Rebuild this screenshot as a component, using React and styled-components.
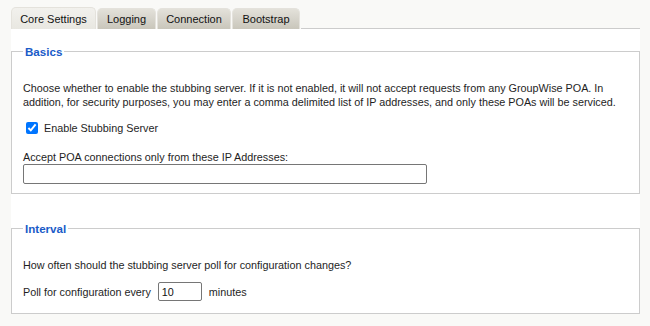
import React from "react";
import styled, { createGlobalStyle } from "styled-components";

const Global = createGlobalStyle`
  html, body { margin: 0; padding: 0; background: #f9f9f7; }
  body { font-family: "Liberation Sans", Arial, sans-serif; font-size: 10.8px; color: #1e1e1e; }
`;

const Page = styled.div`
  width: 650px;
  height: 326px;
  box-sizing: border-box;
  padding: 7px 10px 0 11px;
`;

const TabBar = styled.div`
  display: flex;
  align-items: flex-end;
  height: 22px;
  gap: 1px;
`;

const Tab = styled.div`
  box-sizing: border-box;
  height: ${(p) => (p.$active ? "22px" : "21px")};
  display: flex;
  align-items: center;
  justify-content: center;
  border-radius: 5px 5px 0 0;
  border: 1px solid #e4e2dc;
  border-bottom: none;
  background: ${(p) =>
    p.$active
      ? "linear-gradient(#f2f1ed, #e8e7e1)"
      : "linear-gradient(#e3e1da, #c9c6bb)"};
  color: #111;
  font-size: 11px;
  white-space: nowrap;
  width: ${(p) => p.$w}px;
`;

const TabFill = styled.div`
  flex: 1;
  align-self: stretch;
  border-bottom: 1px solid #cccccc;
`;

const Panel = styled.div`
  background: #ffffff;
  padding-top: 15px;
`;

const Fieldset = styled.fieldset`
  margin: 0 0 ${(p) => p.$mb || 0}px 0;
  border: 1px solid #cccccc;
  padding: 0 12px ${(p) => p.$pb}px 11px;
  min-width: 0;
`;

const Legend = styled.legend`
  padding: 0 2px;
  color: #1a5bc8;
  font-weight: bold;
  font-size: 11.6px;
  line-height: 15px;
`;

const Para = styled.p`
  margin: ${(p) => p.$mt}px 0 0 0;
  line-height: 14px;
  font-size: 10.8px;
`;

const CheckRow = styled.label`
  display: flex;
  align-items: center;
  gap: 6px;
  margin-top: 12px;
  padding-left: 3px;
  line-height: 14px;
  font-size: 10.8px;
`;

const Check = styled.input`
  margin: 0;
  width: 12px;
  height: 12px;
`;

const FieldLabel = styled.div`
  margin-top: 15px;
  line-height: 14px;
  font-size: 10.8px;
`;

const TextInput = styled.input`
  display: block;
  box-sizing: border-box;
  width: ${(p) => p.$w}px;
  height: ${(p) => p.$h}px;
  border: 1px solid #767676;
  border-radius: 2px;
  padding: 0 3px;
  font-family: "Liberation Sans", Arial, sans-serif;
  font-size: 10.8px;
  color: #111;
  background: #fff;
  outline: none;
`;

const InlineRow = styled.div`
  display: flex;
  align-items: center;
  margin-top: 10px;
  font-size: 10.8px;
  line-height: 14px;
  gap: 7px;
`;

export default function App() {
  return (
    <>
      <Global />
      <Page>
        <TabBar>
          <Tab $active $w={85}>Core Settings</Tab>
          <Tab $w={59}>Logging</Tab>
          <Tab $w={74}>Connection</Tab>
          <Tab $w={68}>Bootstrap</Tab>
          <TabFill />
        </TabBar>
        <Panel>
          <Fieldset $pb={9} $mb={27}>
            <Legend>Basics</Legend>
            <Para $mt={22}>
              Choose whether to enable the stubbing server. If it is not enabled, it will not accept requests from any GroupWise POA. In
              addition, for security purposes, you may enter a comma delimited list of IP addresses, and only these POAs will be serviced.
            </Para>
            <CheckRow>
              <Check type="checkbox" defaultChecked />
              Enable Stubbing Server
            </CheckRow>
            <FieldLabel>Accept POA connections only from these IP Addresses:</FieldLabel>
            <TextInput type="text" $w={404} $h={20} />
          </Fieldset>
          <Fieldset $pb={12}>
            <Legend>Interval</Legend>
            <Para $mt={22}>How often should the stubbing server poll for configuration changes?</Para>
            <InlineRow>
              <span>Poll for configuration every</span>
              <TextInput type="text" defaultValue="10" $w={44} $h={19} />
              <span>minutes</span>
            </InlineRow>
          </Fieldset>
        </Panel>
      </Page>
    </>
  );
}
